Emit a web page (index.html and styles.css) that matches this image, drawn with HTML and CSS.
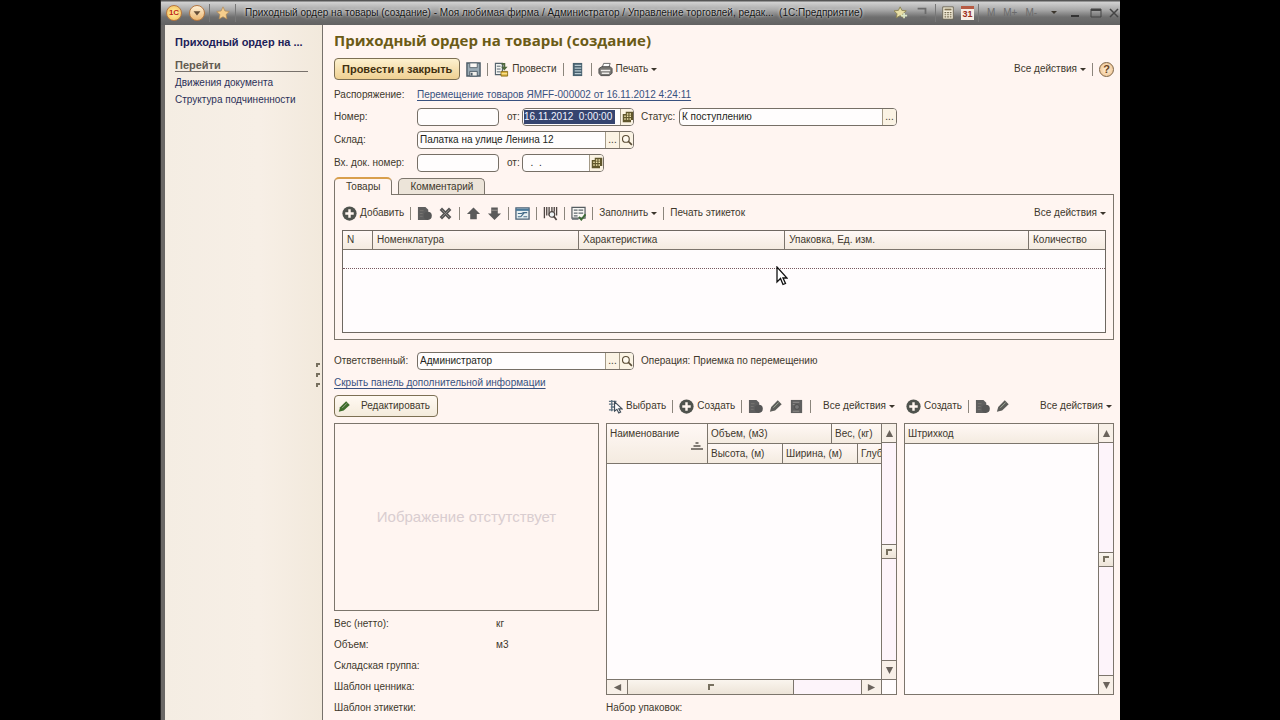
FILE: index.html
```html
<!DOCTYPE html>
<html lang="ru">
<head>
<meta charset="utf-8">
<title>Приходный ордер на товары (создание)</title>
<link rel="stylesheet" href="styles.css">
</head>
<body>
<svg class="sprite" aria-hidden="true">
  <symbol id="plus" viewBox="0 0 16 16"><circle cx="8" cy="8" r="7.6" fill="#4f534e"/><path d="M8 3.5v9M3.5 8h9" stroke="#fff6f0" stroke-width="2.6"/></symbol>
  <symbol id="copy" viewBox="0 0 16 16"><path d="M1 1h8l3 3v11H1z" fill="#5f5f5f"/><path d="M3 5h4M3 8h3M3 11h3" stroke="#777572"/><circle cx="11.500" cy="10.500" r="4.300" fill="#565656"/></symbol>
  <symbol id="cross" viewBox="0 0 16 16"><path d="M3 3l10 10M13 3L3 13" stroke="#555" stroke-width="3.600"/><path d="M4 4l8 8M12 4l-8 8" stroke="#8d8b88" stroke-width="1"/></symbol>
  <symbol id="up" viewBox="0 0 16 16"><path d="M8 1.500l7 7h-3.500V14h-7V8.500H1z" fill="#5b5b5b"/></symbol>
  <symbol id="down" viewBox="0 0 16 16"><path d="M4.500 1.500h7v6.500H15l-7 7-7-7h3.500z" fill="#5b5b5b"/><path d="M4.500 4.500h7" stroke="#a19d99"/></symbol>
  <symbol id="form" viewBox="0 0 16 16"><path d="M1 2h14v12H1z" fill="#e8f0f2" stroke="#4b6276" stroke-width="1.400"/><path d="M1 4h14" stroke="#4b7a9a" stroke-width="2.400"/><path d="M3 8h4l2-1h4M3 11.500h3M9 11.500h4M6 11.500l4-4.500" stroke="#456c89" stroke-width="1.200" fill="none"/></symbol>
  <symbol id="barcode" viewBox="0 0 16 16"><path d="M1.500 1v12M4 1v9M6.500 1v9M9.500 1v6M12 1v5M14.500 1v9" stroke="#4d4542" stroke-width="1.400"/><circle cx="9.500" cy="9" r="3" fill="#eef3f5" stroke="#4d4542" stroke-width="1.200"/><path d="M11.500 11l3 4" stroke="#4d4542" stroke-width="1.800"/></symbol>
  <symbol id="check" viewBox="0 0 16 16"><path d="M1 1.500h14V13H1z" fill="#f8f7f4" stroke="#555d61" stroke-width="1.300"/><path d="M3 4.500h4M8 4.500h5M3 7.500h4M8 7.500h5M3 10.500h4M1 14h7" stroke="#5d686d" stroke-width="1.300"/><path d="M8.500 11.500l2.500 3L15.500 9" fill="none" stroke="#3c6a36" stroke-width="2"/></symbol>
  <symbol id="save" viewBox="0 0 16 16"><path d="M1 1h14v14H1z" fill="#9babb5" stroke="#4d5c67" stroke-width="1.500"/><path d="M4 1h8v5H4z" fill="#fbf8f5" stroke="#5c6972"/><path d="M4 10h8v5H4z" fill="#f2f0ec" stroke="#4d5c67"/><path d="M6 11.500v3" stroke="#4d5c67" stroke-width="2"/></symbol>
  <symbol id="post" viewBox="0 0 16 16"><path d="M1.500 1.500H9v12H1.500z" fill="#f3f4f2" stroke="#55636e" stroke-width="1.200"/><path d="M3 4.500h4M3 7.500h4M3 10.500h4" stroke="#55636e"/><path d="M8 1h4v4h2.500L11 9 7.500 5H10V3H8z" fill="#50683d"/><path d="M7.500 10h7v5h-7z" fill="#dfb43d" stroke="#8b701f"/><path d="M8 12.500h6" stroke="#fff0ae"/></symbol>
  <symbol id="journal" viewBox="0 0 16 16"><path d="M3 1h10v14H3z" fill="#49616f"/><path d="M5 3.500h7M5 6.500h7M5 9.500h7M5 12.500h7" stroke="#b8cad2" stroke-width="1.300"/></symbol>
  <symbol id="print" viewBox="0 0 16 16"><path d="M4 7l2-5.500h7L11 7z" fill="#fff" stroke="#666"/><path d="M1 7l3-2h9l2 2v5l-3 2.500H3L1 12z" fill="#777673" stroke="#4c4c4c"/><path d="M3 9h10M4 12h8" stroke="#eeecea" stroke-width="1.500"/></symbol>
  <symbol id="cal" viewBox="0 0 16 16"><path d="M5 1h10v11h-3v3H1V4h4z" fill="#60562c"/><path d="M6.500 3h2v2h-2zm3.500 0h2v2h-2zM3 6h2v2H3zm3.500 0h2v2h-2zM10 6h2v2h-2zM3 9.500h2v2H3zm3.500 0h2v2h-2zM10 9.500h2v2h-2z" fill="#f0e5ae"/></symbol>
  <symbol id="lens" viewBox="0 0 16 16"><circle cx="6.500" cy="6.500" r="4.500" fill="#fffaf0" stroke="#5a4c35" stroke-width="1.500"/><path d="M10 10l4.500 4.500" stroke="#5a4c35" stroke-width="2.200"/></symbol>
  <symbol id="pencil" viewBox="0 0 16 16"><path d="M1 14.500L2.500 9 10 1.500l4.500 4.500L7 13z" fill="currentColor"/><path d="M5 10l6-6" stroke="#a9b3a0" stroke-width="1"/></symbol>
  <symbol id="bin" viewBox="0 0 16 16"><path d="M2 1h12v14H2z" fill="#5f5f5f"/><path d="M4 3.500h7M4 6h2M4 13h7" stroke="#93918f"/><circle cx="8.500" cy="8.500" r="2.600" fill="#777" stroke="#4e4e4e"/></symbol>
  <symbol id="pick" viewBox="0 0 16 16"><path d="M1 2.500h8M1 5.500h5M3 8.500h4M1 11.500h5M4 1v12" stroke="#5f7482" stroke-width="1.400"/><path d="M7 3v10l2.500-2 2 4 2-1-2-3.500H15z" fill="#fff" stroke="#404d59" stroke-width="1.200"/></symbol>
  <symbol id="star" viewBox="0 0 16 16"><path d="M8 1l2.200 4.700 5 .6-3.700 3.500 1 5L8 12.300 3.500 14.800l1-5L.8 6.300l5-.6z" fill="#f5cd8c" stroke="#b28a55" stroke-width=".8"/></symbol>
</svg>

<div class="window">
  <header class="titlebar">
    <button class="logo" aria-label="1С">1С</button>
    <button class="orb" aria-label="Меню"><svg viewBox="0 0 14 14"><path d="M3 5h8L7 10z" fill="#654d37"/></svg></button>
    <i class="tsep"></i>
    <button class="tool" aria-label="Избранное"><svg><use href="#star"/></svg></button>
    <i class="tsep"></i>
    <span class="caption">Приходный ордер на товары (создание) - Моя любимая фирма / Администратор / Управление торговлей, редак... &nbsp;(1С:Предприятие)</span>
    <button class="tool" aria-label="Добавить в избранное"><svg viewBox="0 0 16 16"><path d="M7 1l2 4 5 .5-4 3.500 1 4.500L7 11l-4.500 2.500 1-4.500L0 5.500 5 5z" fill="#e9dfa6" stroke="#8b8352"/><path d="M8 11h7M11.500 8v6" stroke="#dce6c7" stroke-width="2"/></svg></button>
    <button class="tool" aria-label="Ссылка"><svg viewBox="0 0 16 16"><path d="M3 3h9v6M6 13h7" fill="none" stroke="#6b6b6b" stroke-width="2"/></svg></button>
    <i class="tsep"></i>
    <button class="tool" aria-label="Калькулятор"><svg viewBox="0 0 16 16"><path d="M2 1h12v14H2z" fill="#f4edd9" stroke="#665f4e"/><path d="M4 4h8" stroke="#827455" stroke-width="2"/><path d="M4 7.500h8M4 10h8M4 12.500h8" stroke="#73694e" stroke-width="1.300" stroke-dasharray="2 1"/></svg></button>
    <button class="tool date" aria-label="Календарь">31</button>
    <i class="tsep"></i>
    <span class="mem"><button>M</button><button>M+</button><button>M-</button></span>
    <button class="tool more" aria-label="Ещё"><i class="arrow"></i></button>
    <button class="win" aria-label="Свернуть"><svg viewBox="0 0 12 12"><path d="M2 9h8" stroke="#333" stroke-width="2"/></svg></button>
    <button class="win" aria-label="Развернуть"><svg viewBox="0 0 12 12"><path d="M1 2h10v8H1z" fill="none" stroke="#444"/><path d="M1 3h10" stroke="#444" stroke-width="2"/></svg></button>
    <button class="win close" aria-label="Закрыть"><svg viewBox="0 0 12 12"><path d="M2 2l8 8M10 2l-8 8" stroke="#444" stroke-width="1.500"/></svg></button>
  </header>

  <div class="body">
    <nav class="side">
      <h2>Приходный ордер на ...</h2>
      <h3>Перейти</h3>
      <a href="#">Движения документа</a>
      <a href="#">Структура подчиненности</a>
      <div class="grip"><i></i><i></i><i></i></div>
    </nav>

    <main class="main">
      <h1>Приходный ордер на товары (создание)</h1>
      <div class="bar top">
        <button class="primary">Провести и закрыть</button>
        <button class="tb" aria-label="Записать"><svg><use href="#save"/></svg></button>
        <i class="sep"></i>
        <button class="tb"><svg><use href="#post"/></svg>Провести</button>
        <i class="sep"></i>
        <button class="tb" aria-label="Движения"><svg><use href="#journal"/></svg></button>
        <i class="sep"></i>
        <button class="tb"><svg><use href="#print"/></svg>Печать<i class="arrow"></i></button>
        <button class="tb push">Все действия<i class="arrow"></i></button>
        <i class="sep"></i>
        <button class="help" aria-label="Справка">?</button>
      </div>

      <div class="row order"><span class="label">Распоряжение:</span><a class="link" href="#">Перемещение товаров ЯМFF-000002 от 16.11.2012 4:24:11</a></div>
      <div class="row">
        <label class="label" for="num">Номер:</label>
        <span class="field short"><input id="num" type="text"></span>
        <label class="from" for="dt">от:</label>
        <span class="field stamp"><input id="dt" class="selected" type="text" value="16.11.2012  0:00:00"><button aria-label="Выбрать дату"><svg><use href="#cal"/></svg></button></span>
        <label class="status" for="st">Статус:</label>
        <span class="field state"><input id="st" type="text" value="К поступлению"><button>...</button></span>
      </div>
      <div class="row">
        <label class="label" for="wh">Склад:</label>
        <span class="field wide"><input id="wh" type="text" value="Палатка на улице Ленина 12"><button>...</button><button aria-label="Открыть"><svg><use href="#lens"/></svg></button></span>
      </div>
      <div class="row">
        <label class="label" for="ext">Вх. док. номер:</label>
        <span class="field short"><input id="ext" type="text"></span>
        <label class="from" for="extdt">от:</label>
        <span class="field day"><input id="extdt" type="text" value="  .  ."><button aria-label="Выбрать дату"><svg><use href="#cal"/></svg></button></span>
      </div>

      <div class="tabs" role="tablist">
        <button class="tab active" role="tab" aria-selected="true">Товары</button>
        <button class="tab" role="tab" aria-selected="false">Комментарий</button>
      </div>
      <section class="panel">
        <div class="bar">
          <button class="tb"><svg><use href="#plus"/></svg>Добавить</button>
          <i class="sep"></i>
          <button class="tb" aria-label="Скопировать"><svg><use href="#copy"/></svg></button>
          <button class="tb" aria-label="Удалить"><svg><use href="#cross"/></svg></button>
          <i class="sep"></i>
          <button class="tb" aria-label="Вверх"><svg><use href="#up"/></svg></button>
          <button class="tb" aria-label="Вниз"><svg><use href="#down"/></svg></button>
          <i class="sep"></i>
          <button class="tb" aria-label="Подбор"><svg><use href="#form"/></svg></button>
          <i class="sep"></i>
          <button class="tb" aria-label="Штрихкод"><svg><use href="#barcode"/></svg></button>
          <i class="sep"></i>
          <button class="tb" aria-label="Проверить"><svg><use href="#check"/></svg></button>
          <i class="sep"></i>
          <button class="tb">Заполнить<i class="arrow"></i></button>
          <i class="sep"></i>
          <button class="tb">Печать этикеток</button>
          <button class="tb push">Все действия<i class="arrow"></i></button>
        </div>
        <div class="goods">
          <table>
            <colgroup><col class="c-n"><col><col><col class="c-pack"><col class="c-qty"></colgroup>
            <thead><tr><th>N</th><th>Номенклатура</th><th>Характеристика</th><th>Упаковка, Ед. изм.</th><th>Количество</th></tr></thead>
            <tbody><tr><td colspan="5"></td></tr></tbody>
          </table>
          <svg class="cursor" viewBox="0 0 12 20"><path d="M1 1v15l3.500-3.500 2.500 6 2.500-1-2.500-5.500h4z" fill="#fff" stroke="#111" stroke-width="1.300"/></svg>
        </div>
      </section>

      <div class="row resp">
        <label class="label" for="rs">Ответственный:</label>
        <span class="field wide"><input id="rs" type="text" value="Администратор"><button>...</button><button aria-label="Открыть"><svg><use href="#lens"/></svg></button></span>
        <span class="status">Операция: Приемка по перемещению</span>
      </div>
      <div class="hide"><a class="link" href="#">Скрыть панель дополнительной информации</a></div>

      <div class="extra">
        <section class="col">
          <div class="bar"><button class="edit"><svg><use href="#pencil"/></svg>Редактировать</button></div>
          <div class="picture">Иображение отстутствует</div>
          <dl class="props">
            <dt>Вес (нетто):</dt><dd>кг</dd>
            <dt>Объем:</dt><dd>м3</dd>
            <dt>Складская группа:</dt><dd></dd>
            <dt>Шаблон ценника:</dt><dd></dd>
            <dt>Шаблон этикетки:</dt><dd></dd>
          </dl>
        </section>

        <section class="col">
          <div class="bar inset">
            <button class="tb"><svg><use href="#pick"/></svg>Выбрать</button>
            <i class="sep"></i>
            <button class="tb"><svg><use href="#plus"/></svg>Создать</button>
            <i class="sep"></i>
            <button class="tb" aria-label="Скопировать"><svg><use href="#copy"/></svg></button>
            <button class="tb" aria-label="Изменить"><svg class="small"><use href="#pencil"/></svg></button>
            <button class="tb" aria-label="Пометить на удаление"><svg><use href="#bin"/></svg></button>
            <i class="sep"></i>
            <button class="tb push">Все действия<i class="arrow"></i></button>
          </div>
          <div class="list">
            <div class="view">
              <table>
                <colgroup><col class="p-name"><col class="p-h"><col class="p-w1"><col class="p-w2"><col></colgroup>
                <thead>
                  <tr><th rowspan="2" class="name">Наименование<svg viewBox="0 0 12 9"><path d="M4.500 2h3M2.500 5h7M0 8h12" stroke="#5b5650" stroke-width="1.400"/></svg></th><th colspan="2">Объем, (м3)</th><th colspan="2">Вес, (кг)</th></tr>
                  <tr><th>Высота, (м)</th><th colspan="2">Ширина, (м)</th><th>Глуб</th></tr>
                </thead>
              </table>
            </div>
            <div class="vscroll"><button aria-label="Вверх"><svg viewBox="0 0 10 10"><path d="M5 1l4 8H1z"/></svg></button><span class="track"><i class="thumb"></i></span><button aria-label="Вниз"><svg viewBox="0 0 10 10"><path d="M5 9L1 1h8z"/></svg></button></div>
            <div class="hscroll"><button aria-label="Влево"><svg viewBox="0 0 10 10"><path d="M1 5l8-4v8z"/></svg></button><i class="thumb"></i><span class="track"></span><button aria-label="Вправо"><svg viewBox="0 0 10 10"><path d="M9 5L1 1v8z"/></svg></button></div>
            <div class="corner"></div>
          </div>
          <div class="packs">Набор упаковок:</div>
        </section>

        <section class="col">
          <div class="bar inset">
            <button class="tb"><svg><use href="#plus"/></svg>Создать</button>
            <i class="sep"></i>
            <button class="tb" aria-label="Скопировать"><svg><use href="#copy"/></svg></button>
            <button class="tb" aria-label="Изменить"><svg class="small"><use href="#pencil"/></svg></button>
            <button class="tb push">Все действия<i class="arrow"></i></button>
          </div>
          <div class="list single">
            <div class="view"><table><thead><tr><th>Штрихкод</th></tr></thead></table></div>
            <div class="vscroll"><button aria-label="Вверх"><svg viewBox="0 0 10 10"><path d="M5 1l4 8H1z"/></svg></button><span class="track"><i class="thumb"></i></span><button aria-label="Вниз"><svg viewBox="0 0 10 10"><path d="M5 9L1 1h8z"/></svg></button></div>
          </div>
        </section>
      </div>
    </main>
  </div>
</div>
</body>
</html>
```
FILE: styles.css
```css
* { box-sizing: border-box; }
body {
  margin: 0;
  background: #000;
  color: #40382c;
  font: 10px/14px "Liberation Sans", Arial, sans-serif;
  overflow: hidden;
}
button, input { font: inherit; color: inherit; margin: 0; padding: 0; border: 0; background: none; }
button { display: inline-flex; align-items: center; justify-content: center; white-space: nowrap; }
svg { display: block; flex: none; }
.sprite { position: absolute; width: 0; height: 0; }

.window {
  width: 75%;
  height: 100vh;
  margin: 0 auto;
  display: flex;
  flex-direction: column;
  overflow: hidden;
  background: #fff5f1;
  border-left: 1px solid #222;
}

/* title bar */
.titlebar {
  flex: none;
  height: 25px;
  display: flex;
  align-items: center;
  padding-left: 5px;
  gap: 4px;
  background: linear-gradient(#555 0, #555 1px, #d2d2d2 2px, #a8a8a8 10px, #6f6f6f 17px, #626262 25px);
  color: #161616;
}
.logo, .orb {
  flex: none;
  width: 16px;
  height: 16px;
  border-radius: 50%;
  background: radial-gradient(#fff3a0, #f3ba58);
  border: 1px solid #b77840;
  color: #c02416;
  font-size: 8px;
  font-weight: bold;
}
.orb { margin-left: 3px; background: linear-gradient(#fff0d6, #ecb772); }
.orb svg { width: 12px; height: 12px; }
.tsep { flex: none; width: 1px; height: 18px; background: #777; }
.tool, .win { flex: none; width: 17px; height: 16px; }
.tool svg { width: 14px; height: 14px; }
.win svg { width: 12px; height: 12px; }
.close { width: 12px; }
.caption { flex: none; margin: 0 26px 0 5px; text-shadow: 0 0 3px #fff; white-space: pre; }
.date { width: 13px; height: 14px; background: #f7eee5; border-top: 3px solid #b65a43; color: #9a2d1c; font-size: 9px; font-weight: bold; }
.mem { display: flex; flex: none; gap: 8px; padding-left: 4px; color: #6b6b6b; }
.more { margin-left: auto; }

.body { flex: 1; display: flex; min-height: 0; border-left: 4px solid #6a6866; }

/* navigation */
.side {
  flex: none;
  width: 158px;
  display: flex;
  flex-direction: column;
  padding: 10px 14px 0 10px;
  background: linear-gradient(90deg, #f4ede3, #f7efe6 60%, #f2e9dc);
  border-right: 1px solid #77716b;
  color: #2b3058;
  position: relative;
}
.side h2 { margin: 0 0 10px; font-size: 11px; line-height: 14px; color: #1c2158; white-space: nowrap; }
.side h3 { margin: 0 0 2px; font-size: 11px; line-height: 12px; color: #625b51; border-bottom: 1px solid #77716b; }
.side a { color: inherit; text-decoration: none; line-height: 17px; white-space: nowrap; }
.grip { position: absolute; right: 2px; top: 338px; display: grid; gap: 6px; }
.grip i, .thumb::after { width: 4px; height: 4px; border-top: 2px solid #77705f; border-left: 2px solid #77705f; }

/* form */
.main { flex: 1; min-width: 0; padding: 5px 6px 0 11px; }
h1 { margin: 0; font: bold 15px/20px "Open Sans", "Noto Sans", sans-serif; color: #6b5b16; white-space: nowrap; }
.bar { display: flex; align-items: center; gap: 6px; height: 22px; }
.bar.top { margin-top: 8px; }
.tb { gap: 3px; height: 20px; }
.tb svg { width: 15px; height: 15px; }
.tb .small { width: 14px; height: 14px; color: #5d5d5a; }
.push { margin-left: auto; }
.sep { flex: none; width: 1px; height: 13px; background: #8b857c; }
.arrow { width: 0; height: 0; border: 3px solid transparent; border-top-color: #3b352c; border-bottom: 0; }
.primary, .edit {
  height: 22px;
  border: 1px solid #7c6f53;
  border-radius: 4px;
  background: linear-gradient(#fdf1cf, #efd092);
}
.primary { padding: 0 7px; font-size: 11px; font-weight: bold; color: #41300f; }
.edit { padding: 0 7px 0 3px; gap: 10px; background: linear-gradient(#fff9f2, #f4ebdc); }
.edit svg { width: 13px; height: 13px; color: #3f6c2c; }
.help { width: 15px; height: 15px; border-radius: 50%; border: 1px solid #7e6546; background: radial-gradient(#fff0d8, #edbd88); font-size: 11px; font-weight: bold; color: #6b4222; }

.row { display: flex; align-items: center; height: 18px; margin-bottom: 5px; }
.row.order { margin: 6px 0 4px; }
.label { flex: none; width: 83px; white-space: nowrap; }
.link { color: #38517f; text-decoration: underline; text-underline-offset: 2px; white-space: nowrap; }
.field {
  display: flex;
  height: 18px;
  border: 1px solid #766f66;
  border-radius: 4px;
  background: #fffdfd;
  overflow: hidden;
}
.field input { flex: 1; width: 0; min-width: 0; padding: 0 2px; color: #241f1a; white-space: pre; outline: none; }
.field button { flex: none; width: 14px; background: #fbf3e4; border-left: 1px solid #a49a87; }
.field svg { width: 12px; height: 12px; }
.field .selected { flex: none; width: 91px; margin: 1px 5px 1px 1px; padding: 0; background: #35446f; color: #f1f3ff; }
.short { width: 82px; }
.from { width: 23px; padding-left: 8px; }
.stamp { width: 112px; }
.status { padding-left: 7px; white-space: nowrap; }
label.status { width: 45px; }
.state { flex: 0 1 218px; }
.wide { width: 217px; }
.day { width: 82px; }

/* tabs */
.tabs { display: flex; gap: 6px; height: 17px; position: relative; }
.tab {
  height: 16px;
  margin-top: 1px;
  padding: 0 11px;
  border: 1px solid #7c756c;
  border-bottom: 0;
  border-radius: 5px 5px 0 0;
  background: #ece4d9;
}
.tab.active { height: 18px; margin-top: 0; background: #fff5f1; border-top: 2px solid #d99f4c; }
.panel { border: 1px solid #7c756c; padding: 7px 7px 6px; }
.goods { position: relative; height: 103px; margin-top: 6px; border: 1px solid #6e6861; background: #fffcfd; }
table { width: 100%; border-collapse: separate; border-spacing: 0; table-layout: fixed; }
th {
  height: 19px;
  padding: 0 4px;
  text-align: left;
  font-weight: normal;
  line-height: 14px;
  white-space: nowrap;
  background: linear-gradient(#fff8f5, #f4ebe0);
  border-right: 1px solid #7c756c;
  border-bottom: 1px solid #7c756c;
}
th:last-child { padding-right: 0; border-right: 0; }
td { height: 19px; padding: 0; border-bottom: 1px dotted #77585f; }
.c-n { width: 30px; }
.c-pack { width: 32%; }
.c-qty { width: 76px; }
.cursor { position: absolute; left: 433px; top: 35px; width: 12px; height: 20px; }

.row.resp { margin: 12px 0 6px; }
.hide { height: 14px; margin-bottom: 5px; }

/* additional information */
.extra { display: grid; grid-template-columns: 265fr 291fr 210fr; gap: 7px; }
.col { min-width: 0; }
.extra .bar { margin-bottom: 6px; }
.inset { padding: 0 2px; }
.picture {
  height: 188px;
  display: flex;
  align-items: center;
  justify-content: center;
  border: 1px solid #7c756c;
  color: #d9cdd0;
  font-size: 15px;
}
.props { margin: 2px 0 0; display: grid; grid-template-columns: 162px 1fr; grid-auto-rows: 21px; align-items: center; }
.props dd { margin: 0; }
.list {
  height: 272px;
  display: grid;
  grid-template-columns: 1fr 15px;
  grid-template-rows: 1fr 15px;
  border: 1px solid #7c756c;
  background: #fffcfd;
}
.list.single { grid-template-rows: 1fr; }
.view { min-width: 0; overflow: hidden; }
.view th { height: 20px; padding-left: 3px; }
.p-name { width: 101px; }
.p-h { width: 75px; }
.p-w1 { width: 49px; }
.p-w2 { width: 26px; }
.view .name { vertical-align: top; padding-top: 3px; }
.name svg { width: 12px; height: 9px; margin-left: auto; }
.vscroll { display: flex; flex-direction: column; border-left: 1px solid #7c756c; background: #fdf4fa; }
.vscroll button { height: 19px; background: #f8f0e8; border-bottom: 1px solid #7c756c; }
.vscroll button:last-child { border-top: 1px solid #7c756c; border-bottom: 0; }
.vscroll svg, .hscroll svg { width: 9px; height: 9px; fill: #6a635c; }
.track { flex: 1; display: flex; flex-direction: column; justify-content: center; }
.thumb { display: flex; align-items: center; justify-content: center; background: linear-gradient(#faf5ee, #ede4d8); }
.thumb::after { content: ""; }
.vscroll .thumb { height: 15px; border: solid #7c756c; border-width: 1px 0; }
.hscroll { display: flex; border-top: 1px solid #7c756c; background: #fdf4fa; }
.hscroll button { width: 20px; background: #f8f0e8; }
.hscroll button:last-child { border-left: 1px solid #7c756c; }
.hscroll .thumb { flex: 0 0 61%; border: solid #7c756c; border-width: 0 1px; }
.corner { border: solid #7c756c; border-width: 1px 0 0 1px; }
.packs { margin-top: 6px; }
```
